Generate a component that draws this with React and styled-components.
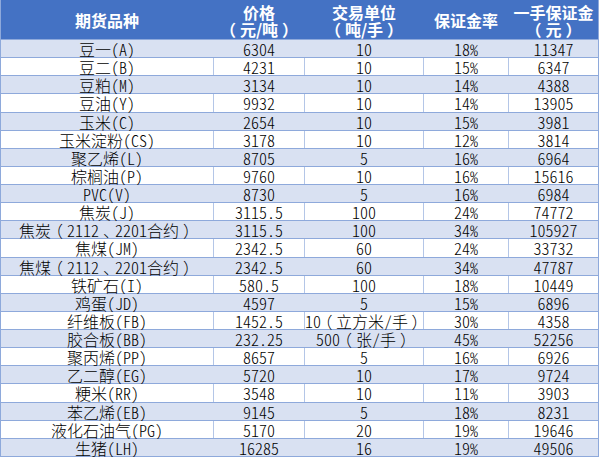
import React from "react";
import styled, { createGlobalStyle } from "styled-components";

const GlobalStyle = createGlobalStyle`
  html, body {
    margin: 0;
    padding: 0;
    background: #ffffff;
  }
  body {
    font-family: "Noto Sans CJK SC", "Liberation Mono", monospace;
    text-spacing-trim: space-all;
  }
`;

const columns = "213px 91px 119px 85px 90px";

const rows = [
  ["豆一(A)", "6304", "10", "18%", "11347"],
  ["豆二(B)", "4231", "10", "15%", "6347"],
  ["豆粕(M)", "3134", "10", "14%", "4388"],
  ["豆油(Y)", "9932", "10", "14%", "13905"],
  ["玉米(C)", "2654", "10", "15%", "3981"],
  ["玉米淀粉(CS)", "3178", "10", "12%", "3814"],
  ["聚乙烯(L)", "8705", "5", "16%", "6964"],
  ["棕榈油(P)", "9760", "10", "16%", "15616"],
  ["PVC(V)", "8730", "5", "16%", "6984"],
  ["焦炭(J)", "3115.5", "100", "24%", "74772"],
  ["焦炭（2112、2201合约）", "3115.5", "100", "34%", "105927"],
  ["焦煤(JM)", "2342.5", "60", "24%", "33732"],
  ["焦煤（2112、2201合约）", "2342.5", "60", "34%", "47787"],
  ["铁矿石(I)", "580.5", "100", "18%", "10449"],
  ["鸡蛋(JD)", "4597", "5", "15%", "6896"],
  ["纤维板(FB)", "1452.5", "10（立方米/手）", "30%", "4358"],
  ["胶合板(BB)", "232.25", "500（张/手）", "45%", "52256"],
  ["聚丙烯(PP)", "8657", "5", "16%", "6926"],
  ["乙二醇(EG)", "5720", "10", "17%", "9724"],
  ["粳米(RR)", "3548", "10", "11%", "3903"],
  ["苯乙烯(EB)", "9145", "5", "18%", "8231"],
  ["液化石油气(PG)", "5170", "20", "19%", "19646"],
  ["生猪(LH)", "16285", "16", "19%", "49506"],
];

const headers = [
  ["期货品种"],
  ["价格", "（元/吨）"],
  ["交易单位", "（吨/手）"],
  ["保证金率"],
  ["一手保证金", "（元）"],
];

const Table = styled.div`
  width: 599px;
  height: 457px;
  display: flex;
  flex-direction: column;
  border-left: 1px solid #8ea9db;
  box-sizing: border-box;
`;

const HeaderRow = styled.div`
  display: grid;
  grid-template-columns: ${columns};
  height: 40px;
  flex: none;
  background: #4472c4;
  border-bottom: 1px solid #8ea9db;
  box-sizing: border-box;
`;

const HeaderCell = styled.div`
  display: flex;
  flex-direction: column;
  align-items: center;
  justify-content: center;
  padding-top: 2px;
  color: #ffffff;
  font-weight: 700;
  font-size: 16px;
  line-height: 17px;
  white-space: nowrap;
  border-right: 1px solid #4472c4;
  &:last-child {
    border-right-color: #8ea9db;
  }
`;

const Row = styled.div`
  display: grid;
  grid-template-columns: ${columns};
  flex: 1;
  min-height: 0;
  background: ${(p) => (p.$alt ? "#d9e1f2" : "#ffffff")};
  border-bottom: 1px solid #8ea9db;
  box-sizing: border-box;
`;

const Cell = styled.div`
  display: flex;
  align-items: center;
  justify-content: center;
  padding-top: 1px;
  color: #000000;
  font-size: 16px;
  font-weight: 300;
  line-height: 1;
  white-space: nowrap;
  font-feature-settings: "hwid";
  border-right: 1px solid ${(p) => (p.$alt ? "#d9e1f2" : "#b4c6e7")};
  &:last-child {
    border-right-color: #8ea9db;
  }
`;

// full-width punctuation keeps a full em box, glyph centred like the original's Song face
const Wide = styled.span`
  display: inline-block;
  width: 1em;
  font-feature-settings: "halt";
  text-align: center;
`;

const renderText = (v) =>
  v.split(/([（）、])/).map((part, k) =>
    /^[（）、]$/.test(part) ? <Wide key={k}>{part}</Wide> : part
  );

export default function App() {
  return (
    <>
      <GlobalStyle />
      <Table>
        <HeaderRow>
          {headers.map((lines, i) => (
            <HeaderCell key={i}>
              {lines.map((l) => (
                <span key={l}>{renderText(l)}</span>
              ))}
            </HeaderCell>
          ))}
        </HeaderRow>
        {rows.map((r, i) => (
          <Row key={i} $alt={i % 2 === 0}>
            {r.map((v, j) => (
              <Cell key={j} $alt={i % 2 === 0}>
                {renderText(v)}
              </Cell>
            ))}
          </Row>
        ))}
      </Table>
    </>
  );
}
